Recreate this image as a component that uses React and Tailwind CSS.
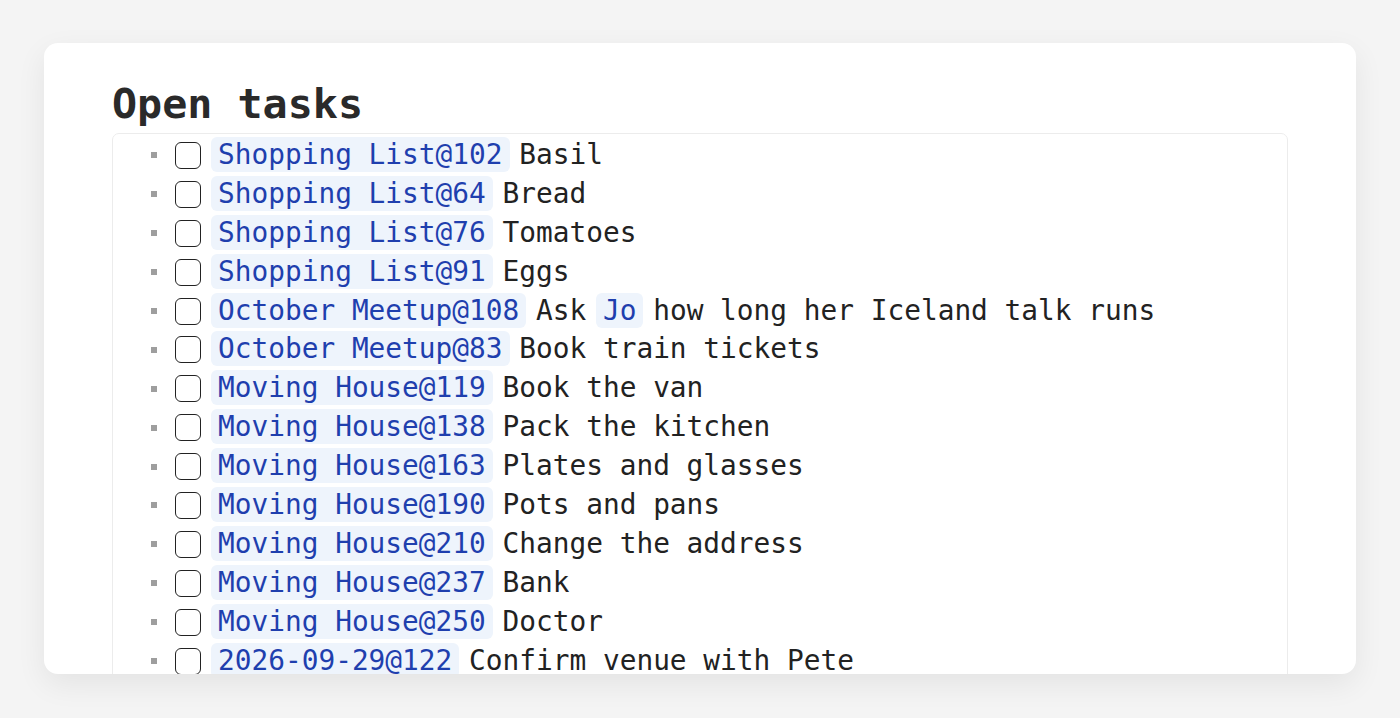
import React from "react";

const rows = [
  ["Shopping List@102", ["Basil"]],
  ["Shopping List@64", ["Bread"]],
  ["Shopping List@76", ["Tomatoes"]],
  ["Shopping List@91", ["Eggs"]],
  ["October Meetup@108", ["Ask ", { chip: "Jo" }, " how long her Iceland talk runs"]],
  ["October Meetup@83", ["Book train tickets"]],
  ["Moving House@119", ["Book the van"]],
  ["Moving House@138", ["Pack the kitchen"]],
  ["Moving House@163", ["Plates and glasses"]],
  ["Moving House@190", ["Pots and pans"]],
  ["Moving House@210", ["Change the address"]],
  ["Moving House@237", ["Bank"]],
  ["Moving House@250", ["Doctor"]],
  ["2026-09-29@122", ["Confirm venue with Pete"]],
];

function Chip({ children }) {
  return (
    <span className="-mx-[7px] rounded-[6px] bg-[#eef4fc] px-[7px] py-[1px] text-[#1f3fae]">
      {children}
    </span>
  );
}

export default function App() {
  return (
    <div
      className="flex h-[718px] w-full justify-center bg-[#f4f4f4] pt-[43px]"
      style={{ fontFamily: '"DejaVu Sans Mono", "Liberation Mono", monospace' }}
    >
      <div className="h-[631px] w-[1312px] overflow-hidden rounded-[14px] bg-white px-[68px] pt-[36px] shadow-[0_10px_30px_rgba(0,0,0,0.07)]">
        <h1 className="text-[41.7px] font-bold leading-[50px] text-[#2a2a2a]">Open tasks</h1>
        <div className="mt-[4px] rounded-[7px] border border-[#ececec] pt-[2px]">
          {rows.map(([tag, rest], i) => (
            <div key={i} className="flex h-[38.9px] items-center pl-[38px] text-[27.8px] leading-[38.9px] text-[#222]">
              <span className="h-[6px] w-[6px] shrink-0 bg-[#9e9e9e]" />
              <span className="ml-[18px] h-[27px] w-[26px] shrink-0 rounded-[6px] border-[1.5px] border-[#222]" />
              <div className="ml-[17px] whitespace-pre">
                <Chip>{tag}</Chip>
                {" "}
                {rest.map((p, j) =>
                  typeof p === "string" ? <span key={j}>{p}</span> : <Chip key={j}>{p.chip}</Chip>
                )}
              </div>
            </div>
          ))}
        </div>
      </div>
    </div>
  );
}
